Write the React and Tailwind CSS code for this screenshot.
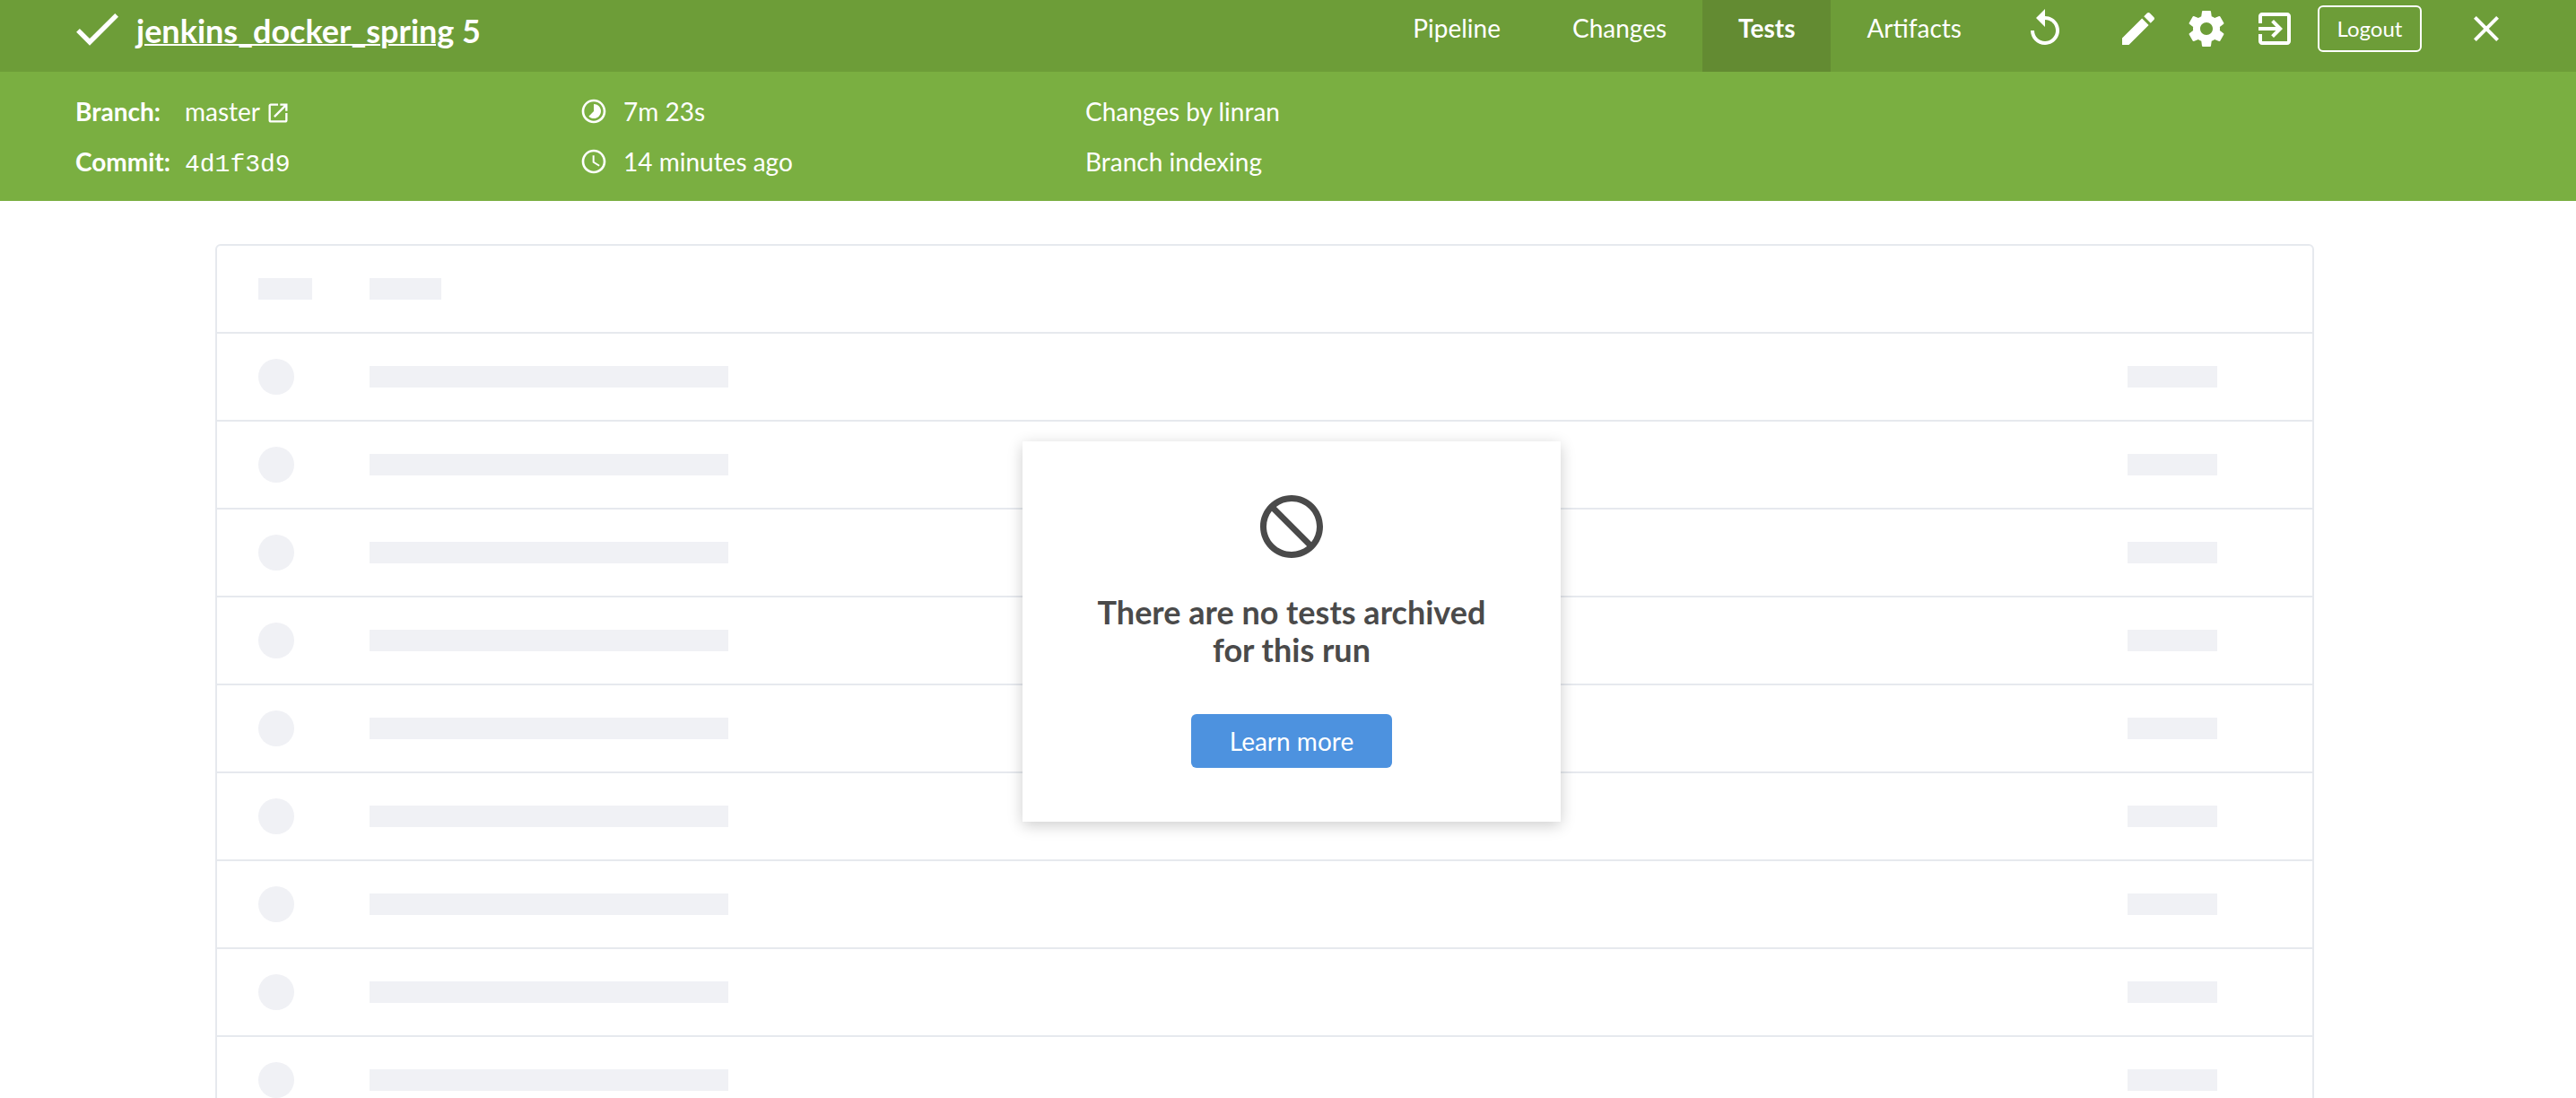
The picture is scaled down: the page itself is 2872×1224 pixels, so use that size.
const ICONS = {
  check: "M9 16.17L4.83 12l-1.42 1.41L9 19 21 7l-1.41-1.41z",
  replay:
    "M12 5V1L7 6l5 5V7c3.31 0 6 2.69 6 6s-2.69 6-6 6-6-2.69-6-6H4c0 4.42 3.58 8 8 8s8-3.58 8-8-3.58-8-8-8z",
  edit: "M3 17.25V21h3.75L17.81 9.94l-3.75-3.75L3 17.25zM20.71 7.04c.39-.39.39-1.02 0-1.41l-2.34-2.34c-.39-.39-1.02-.39-1.41 0l-1.83 1.83 3.75 3.75 1.83-1.83z",
  settings:
    "M19.43 12.98c.04-.32.07-.64.07-.98s-.03-.66-.07-.98l2.11-1.65c.19-.15.24-.42.12-.64l-2-3.46c-.12-.22-.39-.3-.61-.22l-2.49 1c-.52-.4-1.08-.73-1.69-.98l-.38-2.65C14.46 2.18 14.25 2 14 2h-4c-.25 0-.46.18-.49.42l-.38 2.65c-.61.25-1.17.59-1.69.98l-2.49-1c-.23-.09-.49 0-.61.22l-2 3.46c-.13.22-.07.49.12.64l2.11 1.65c-.04.32-.07.65-.07.98s.03.66.07.98l-2.11 1.65c-.19.15-.24.42-.12.64l2 3.46c.12.22.39.3.61.22l2.49-1c.52.4 1.08.73 1.69.98l.38 2.65c.03.24.24.42.49.42h4c.25 0 .46-.18.49-.42l.38-2.65c.61-.25 1.17-.59 1.69-.98l2.49 1c.23.09.49 0 .61-.22l2-3.46c.12-.22.07-.49-.12-.64l-2.11-1.65zM12 15.5c-1.93 0-3.5-1.57-3.5-3.5s1.57-3.5 3.5-3.5 3.5 1.57 3.5 3.5-1.57 3.5-3.5 3.5z",
  exit: "M10.09 15.59L11.5 17l5-5-5-5-1.41 1.41L12.67 11H3v2h9.67l-2.58 2.59zM19 3H5c-1.11 0-2 .9-2 2v4h2V5h14v14H5v-4H3v4c0 1.1.89 2 2 2h14c1.1 0 2-.9 2-2V5c0-1.1-.9-2-2-2z",
  close:
    "M19 6.41L17.59 5 12 10.59 6.41 5 5 6.41 10.59 12 5 17.59 6.41 19 12 13.41 17.59 19 19 17.59 13.41 12z",
  launch:
    "M19 19H5V5h7V3H5c-1.11 0-2 .9-2 2v14c0 1.1.89 2 2 2h14c1.1 0 2-.9 2-2v-7h-2v7zM14 3v2h3.59l-9.83 9.83 1.41 1.41L19 6.41V10h2V3h-7z",
  timelapse:
    "M16.24 7.76C15.07 6.59 13.54 6 12 6v6l-4.24 4.24c2.34 2.34 6.14 2.34 8.49 0 2.34-2.34 2.34-6.14-.01-8.48zM12 2C6.48 2 2 6.48 2 12s4.48 10 10 10 10-4.48 10-10S17.52 2 12 2zm0 18c-4.42 0-8-3.58-8-8s3.58-8 8-8 8 3.58 8 8-3.58 8-8 8z",
  schedule:
    "M11.99 2C6.47 2 2 6.48 2 12s4.47 10 9.99 10C17.52 22 22 17.52 22 12S17.52 2 11.99 2zM12 20c-4.42 0-8-3.58-8-8s3.58-8 8-8 8 3.58 8 8-3.58 8-8 8zM12.5 7H11v6l5.25 3.15.75-1.23-4.5-2.67z",
  block:
    "M12 2C6.48 2 2 6.48 2 12s4.48 10 10 10 10-4.48 10-10S17.52 2 12 2zM4 12c0-4.42 3.58-8 8-8 1.85 0 3.55.63 4.9 1.69L5.69 16.9C4.63 15.55 4 13.85 4 12zm8 8c-1.85 0-3.55-.63-4.9-1.69L18.31 7.1C19.37 8.45 20 10.15 20 12c0 4.42-3.58 8-8 8z",
};

function Icon({ name, className }) {
  const flip = name === "block" ? "matrix(-1 0 0 1 24 0)" : undefined;
  return (
    <svg viewBox="0 0 24 24" fill="currentColor" aria-hidden="true" className={className}>
      <path d={ICONS[name]} transform={flip} />
    </svg>
  );
}

function IconButton({ name, label }) {
  return (
    <button type="button" aria-label={label} className="block cursor-pointer">
      <Icon name={name} className="size-12" />
    </button>
  );
}

const TABS = ["Pipeline", "Changes", "Tests", "Artifacts"];

function Header() {
  return (
    <header className="flex h-20 items-stretch bg-[#6d9d38] pr-19 pl-19 text-white">
      <div className="flex h-16 flex-1 items-center gap-3">
        <Icon name="check" className="size-16 shrink-0" />
        <h1 className="pt-1 text-4xl font-bold">
          <a href="#activity" className="underline decoration-2">
            jenkins_docker_spring
          </a>{" "}
          5
        </h1>
      </div>
      <nav className="flex">
        {TABS.map((tab) => (
          <a
            key={tab}
            href={"#" + tab.toLowerCase()}
            className={
              tab === "Tests"
                ? "bg-[#638b32] px-10 pt-[11px] text-[28px] leading-10 font-bold"
                : "px-10 pt-[11px] text-[28px] leading-10"
            }
          >
            {tab}
          </a>
        ))}
      </nav>
      <div className="flex h-16 items-center pl-[29px]">
        <IconButton name="replay" label="Rerun" />
        <div className="flex items-center gap-7 pl-14">
          <IconButton name="edit" label="Edit" />
          <IconButton name="settings" label="Settings" />
          <IconButton name="exit" label="Go to classic" />
        </div>
        <button
          type="button"
          className="ml-6 h-13 w-29 cursor-pointer rounded-md border-2 border-white text-2xl"
        >
          Logout
        </button>
        <div className="pl-12">
          <IconButton name="close" label="Close" />
        </div>
      </div>
    </header>
  );
}

function RunDetails() {
  return (
    <section className="flex bg-[#7aaf41] py-4 pl-21 text-[28px] leading-14 text-white">
      <dl className="grid w-[562px] grid-cols-[122px_1fr] items-baseline">
        <dt className="font-bold">Branch:</dt>
        <dd className="leading-10">
          <a href="#master" className="flex items-center gap-1.5">
            master
            <Icon name="launch" className="mt-1 size-7" />
          </a>
        </dd>
        <dt className="font-bold">Commit:</dt>
        <dd className="font-['Liberation_Mono',monospace] leading-10">4d1f3d9</dd>
      </dl>
      <div className="w-[564px]">
        <div className="flex items-center gap-[17px]">
          <Icon name="timelapse" className="size-8" />
          7m 23s
        </div>
        <div className="flex items-center gap-[17px]">
          <Icon name="schedule" className="size-8" />
          14 minutes ago
        </div>
      </div>
      <div>
        <div>Changes by linran</div>
        <div>Branch indexing</div>
      </div>
    </section>
  );
}

function PlaceholderTable() {
  return (
    <div
      aria-hidden="true"
      className="mt-12 mr-[292px] ml-60 divide-y-2 divide-[#e6e9ee] rounded-md border-2 border-[#e6e9ee]"
    >
      <div className="flex h-[98px] items-center pl-[46px]">
        <div className="h-6 w-15 bg-[#f0f1f5]" />
        <div className="ml-16 h-6 w-20 bg-[#f0f1f5]" />
      </div>
      {Array.from({ length: 10 }, (_, i) => (
        <div key={i} className="flex h-[98px] items-center pr-[106px] pl-[46px]">
          <div className="size-10 rounded-full bg-[#f0f1f5]" />
          <div className="ml-21 h-6 w-100 bg-[#f0f1f5]" />
          <div className="ml-auto h-6 w-25 bg-[#f0f1f5]" />
        </div>
      ))}
    </div>
  );
}

function EmptyState() {
  return (
    <div className="absolute inset-x-0 top-[268px] flex justify-center pl-2">
      <div className="flex w-150 flex-col items-center bg-white px-15 pt-[53px] pb-15 text-center shadow-[0_4px_16px_rgba(0,0,0,0.2)]">
        <Icon name="block" className="size-21 text-[#4a4a4a]" />
        <h2 className="mt-8 text-4xl leading-[42px] font-bold text-[#4a4a4a]">
          There are no tests archived for this run
        </h2>
        <button
          type="button"
          className="mt-[51px] h-15 w-56 cursor-pointer rounded-md bg-[#4d92df] text-[28px] text-white"
        >
          Learn more
        </button>
      </div>
    </div>
  );
}

export default function App() {
  return (
    <div className="flex h-screen flex-col overflow-hidden bg-white font-['Lato',sans-serif]">
      <Header />
      <RunDetails />
      <main className="relative flex-1 overflow-hidden">
        <PlaceholderTable />
        <EmptyState />
      </main>
    </div>
  );
}
